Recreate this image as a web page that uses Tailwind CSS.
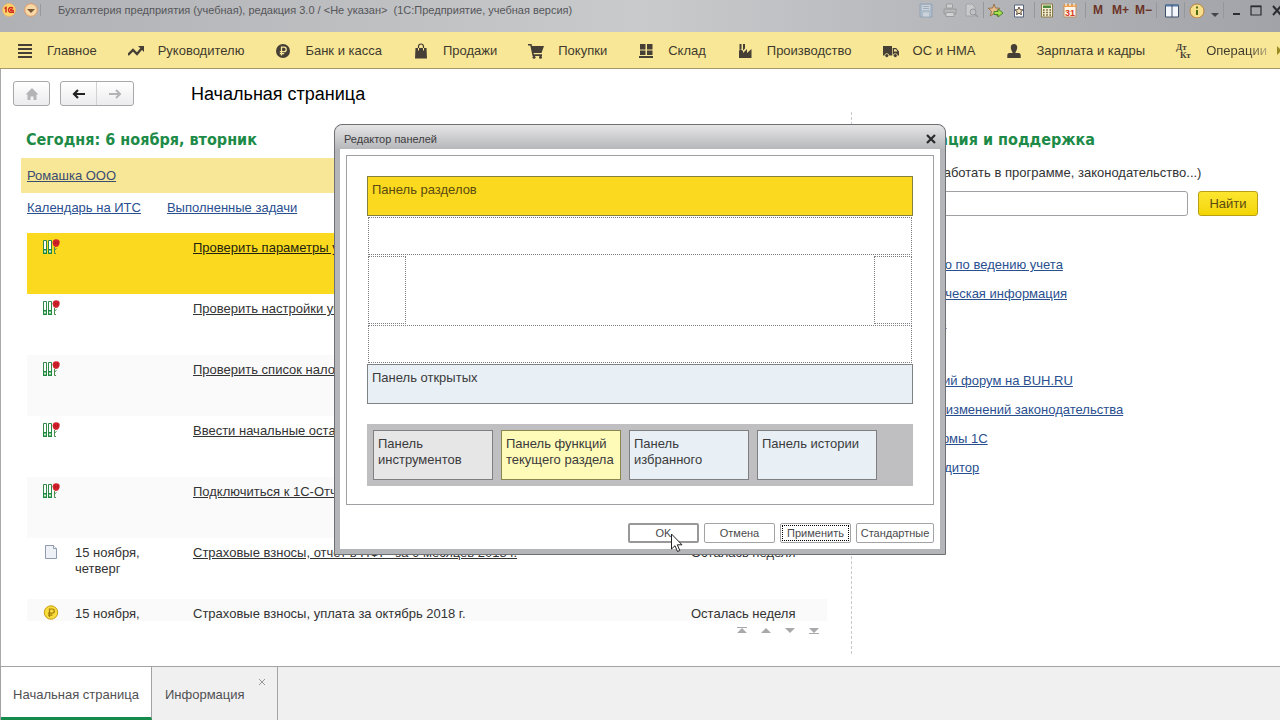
<!DOCTYPE html>
<html lang="ru">
<head>
<meta charset="utf-8">
<meta name="viewport" content="width=device-width, initial-scale=1">
<title>Бухгалтерия предприятия (учебная), редакция 3.0</title>
<script src="https://cdn.jsdelivr.net/npm/@tailwindcss/browser@4"></script>
</head>
<body class="flex h-screen min-h-[720px] flex-col overflow-hidden bg-white font-['Liberation_Sans',Arial,sans-serif] text-[13px] leading-4 text-[#333]">

<svg class="hidden" aria-hidden="true">
  <symbol id="task" viewBox="0 0 17 16">
    <path d="M.5 1.500h3v13h-3zM5.500 1.500h3v13h-3z" fill="#fff" stroke="#2f8a48"/>
    <path d="M0 10h4v5H0zM5 10h4v5H5z" fill="#1f8a3f"/>
    <path d="M1 11.500h2v2H1zM6 11.500h2v2H6z" fill="#d6f0d8"/>
    <path d="M11.500 8v6.500h1.500M11.500 11l2-1.500" fill="none" stroke="#4a8a4a"/>
    <path d="m10.500 1 2-.8 2.500.3 1.700 1.500-.2 3-1.500 2.500-2.700.5-2-1.500-.8-3z" fill="#d3222c"/>
    <path d="m11.500 2.500 1.500 1.200-1.500 1.600M14.800 2.300l-.3 3" fill="none" stroke="#9b141b" stroke-width=".7"/>
  </symbol>
</svg>

<header class="flex h-8 shrink-0 items-start bg-linear-to-r from-[#b0b1b4] via-[#c9cacc] to-[#a2a3a8] text-[12px] text-[#55565a]">
  <div class="flex h-5 grow items-center pl-[2px]">
    <svg class="size-4" viewBox="0 0 16 16"><circle cx="7" cy="8" r="6.500" fill="#fbd76b" stroke="#e8b27a"/><path d="M2.500 6.500 4 5.500v5M11 6.500C9.500 4.500 6.500 5.500 6.500 8s2 2.500 5.500 2.300M10 7.600c-1.500-.6-2 .9-.5 1H12" fill="none" stroke="#d5281e" stroke-width="1.500"/></svg>
    <svg class="ml-1 size-4" viewBox="0 0 16 16"><circle cx="9" cy="8" r="6.300" fill="#f7d9a8" stroke="#e59a63"/><path d="M5 7h8l-4 4z" fill="#7b5534"/></svg>
    <span class="ml-[2px] h-3 w-px bg-[#98999d]"></span>
    <h1 class="ml-[17px] text-[11px] whitespace-nowrap">Бухгалтерия предприятия (учебная), редакция 3.0 / &lt;Не указан&gt;&nbsp; (1С:Предприятие, учебная версия)</h1>
  </div>
  <div class="flex h-5 shrink-0 items-center">
    <button aria-label="Сохранить" class="opacity-60"><svg class="size-4" viewBox="0 0 16 16"><path d="M2 2h12v13H2z" fill="#a9bfd3" stroke="#7c97b3"/><path d="M4 3h8v5H4zM5 10.500h6v4H5z" fill="#d9e4ee"/><path d="M5 4.500h6M5 6.500h6" stroke="#8da5bd"/></svg></button>
    <button aria-label="Печать" class="ml-2 opacity-60"><svg class="size-4" viewBox="0 0 16 16"><path d="M4.500 2h6v4h-6z" fill="#e2e2e2" stroke="#8c8c8c"/><path d="M2 7h12v5H2z" fill="#b9b9b9" stroke="#858585"/><path d="M4 10.500h8v4H4z" fill="#e6e6e6" stroke="#8c8c8c"/></svg></button>
    <button aria-label="Просмотр" class="ml-[5px] opacity-60"><svg class="size-4" viewBox="0 0 16 16"><path d="M3 2h6l3 3v9H3z" fill="#d8d8da" stroke="#97979b"/><circle cx="10" cy="10" r="3" fill="#c4cad0" stroke="#85858b"/><path d="m12 12 3 3" stroke="#85858b" stroke-width="1.500"/></svg></button>
    <span class="ml-1 h-4 w-px bg-[#96979b]"></span>
    <button aria-label="В избранное" class="ml-1"><svg class="size-4" viewBox="0 0 16 16"><path d="m6 2 1.500 4 4.500.3-3.500 2.900L9.700 14 6 11.400 2.300 14l1.200-4.800L.3 6.300 4.600 6z" fill="#e8bd8c" stroke="#8e623b" stroke-width=".8"/><path d="M6 9.500h4V7l5 4-5 4v-2.500H6z" fill="#a8e04f" stroke="#3f7d23" stroke-width=".9"/></svg></button>
    <button aria-label="Избранное" class="ml-[7px]"><svg class="size-4" viewBox="0 0 16 16"><path d="M3.500 3h9v12h-9z" fill="#fff" stroke="#55627a"/><path d="m8 5 1.200 2.700 2.800.2-2.200 1.900.7 2.900L8 11.200l-2.500 1.500.7-2.900L4 7.900l2.800-.2z" fill="#f4e3c1" stroke="#4a3a2c" stroke-width=".9"/></svg></button>
    <span class="ml-[7px] h-4 w-px bg-[#96979b]"></span>
    <button aria-label="Калькулятор" class="ml-1"><svg class="size-4" viewBox="0 0 16 16"><path d="M2.500 2h11v13h-11z" fill="#f6efcf" stroke="#8a7a48"/><path d="M4 3.500h8v2.500H4z" fill="#4d8a3c"/><path d="M4 8h8M4 10.500h8M4 13h8" stroke="#6b5d34" stroke-width="1.500" stroke-dasharray="1.600 1.600"/></svg></button>
    <button aria-label="Календарь" class="ml-[7px]"><svg class="size-4" viewBox="0 0 16 16"><path d="M2 3h12v12H2z" fill="#fff7ec" stroke="#b98f68"/><path d="M1.500 2.500h13V5h-13z" fill="#eaa04e"/><path d="M4 1v3M8 1v3M12 1v3" stroke="#fff"/><text x="8" y="13.800" text-anchor="middle" font-size="9" font-weight="700" fill="#d63a1c">31</text></svg></button>
    <span class="ml-[7px] h-4 w-px bg-[#96979b]"></span>
    <button class="ml-[7px] font-bold text-[#6b3427]">M</button>
    <button class="ml-[9px] font-bold text-[#6b3427]">M+</button>
    <button class="ml-[6px] font-bold text-[#6b3427]">M−</button>
    <span class="ml-1 h-4 w-px bg-[#96979b]"></span>
    <button aria-label="Панели" class="ml-[7px]"><svg class="size-4" viewBox="0 0 16 16"><path d="M1.500 3h13v12h-13z" fill="#f3f6fa" stroke="#3d4f68"/><path d="M1.500 3.500h13" stroke="#5679a6" stroke-width="2"/><path d="M8 3v12" stroke="#3d4f68"/></svg></button>
    <span class="ml-1 h-4 w-px bg-[#96979b]"></span>
    <button aria-label="Справка" class="ml-1"><svg class="size-4" viewBox="0 0 16 16"><circle cx="8" cy="9" r="7" fill="#f8df8b" stroke="#b9803b"/><path d="M8 4.500v2M8 8v5" stroke="#4e6b12" stroke-width="2"/></svg></button>
    <button aria-label="Ещё" class="ml-[6px]"><svg class="h-4 w-2" viewBox="0 0 8 16"><path d="M0 11h8l-4 4z" fill="#44454a"/></svg></button>
    <span class="ml-1 h-4 w-px bg-[#96979b]"></span>
    <button aria-label="Свернуть" class="ml-[6px]"><svg class="size-3" viewBox="0 0 12 12"><path d="M3 10h7" stroke="#2d2e31" stroke-width="2"/></svg></button>
    <button aria-label="Развернуть" class="ml-[6px]"><svg class="size-4" viewBox="0 0 16 16"><path d="M3 4h10v9H3z" fill="none" stroke="#2d2e31" stroke-width="1.200"/><path d="M3 4.500h10" stroke="#2d2e31" stroke-width="1.500"/></svg></button>
    <button aria-label="Закрыть" class="-mr-[6px] ml-[6px]"><svg class="size-4" viewBox="0 0 16 16"><path d="m3 4 8 9M11 4l-8 9" stroke="#2d2e31" stroke-width="2"/></svg></button>
  </div>
</header>

<nav class="relative flex h-[37px] shrink-0 items-center gap-[31px] overflow-hidden border-b border-[#a39a6c] bg-[#f9e798] pt-[2px] pl-[17px] whitespace-nowrap text-[#3f3b2c]">
  <a href="#" class="flex items-center gap-[14px]"><svg class="size-4" viewBox="0 0 16 16"><path d="M1 2h14M1 6h14M1 10h14M1 14h14" stroke="#463f36" stroke-width="2"/></svg>Главное</a>
  <a href="#" class="flex items-center gap-[14px]"><svg class="size-4" viewBox="0 0 16 16"><path d="m0 12 5-5 4 4 5-6" fill="none" stroke="#463f36" stroke-width="2.400"/><path d="M10 3h6v6z" fill="#463f36"/></svg>Руководителю</a>
  <a href="#" class="flex items-center gap-[14px]"><svg class="size-4" viewBox="0 0 16 16"><circle cx="8" cy="8" r="7" fill="#463f36"/><path d="M6.500 12.500V4.200H9a2.200 2.200 0 0 1 0 4.500H4.800M4.800 10.700h4.400" fill="none" stroke="#f9e798" stroke-width="1.300"/></svg>Банк и касса</a>
  <a href="#" class="flex items-center gap-[14px]"><svg class="size-4" viewBox="0 0 16 16"><path d="M2.500 5h11l.5 10.500H2z" fill="#463f36"/><path d="M5.500 5V3.500a2.500 2.500 0 0 1 5 0V5" fill="none" stroke="#463f36" stroke-width="1.200"/><path d="M5.500 5v2.500M10.500 5v2.500" stroke="#f9e798" stroke-width="1"/></svg>Продажи</a>
  <a href="#" class="flex items-center gap-[14px]"><svg class="size-4" viewBox="0 0 16 16"><path d="M0 1h3.500l.6 2H16l-2.500 7H5.600l.3 1.300H14V13H4.500L2.300 2.500H0z" fill="#463f36"/><circle cx="6" cy="14.300" r="1.500" fill="#463f36"/><circle cx="12.500" cy="14.300" r="1.500" fill="#463f36"/></svg>Покупки</a>
  <a href="#" class="flex items-center gap-[14px]"><svg class="size-4" viewBox="0 0 16 16"><path d="M2 1h5.500v5.500H2zM9 1h5.500v5.500H9zM2 7.500h5.500v4.500H2zM9 7.500h5.500v4.500H9zM1 13h14v2H1z" fill="#463f36"/></svg>Склад</a>
  <a href="#" class="flex items-center gap-[14px]"><svg class="size-4" viewBox="0 0 16 16"><path d="M2 15V7.500l2-1 2 1.500V10l4-4v4l4.500-4v9zM2.500 1h2v5l-2 1zM6 1h2v4.500L6 7.500z" fill="#463f36"/></svg>Производство</a>
  <a href="#" class="flex items-center gap-[14px]"><svg class="size-4" viewBox="0 0 16 16"><path d="M0 3h9v9.500H0zM9.700 5h3.500L16 8.500v4H9.700z" fill="#463f36"/><path d="M11 6.300h2l1.500 2.200H11z" fill="#f9e798"/><circle cx="3.800" cy="12.600" r="2" fill="#463f36" stroke="#f9e798" stroke-width=".8"/><circle cx="12.300" cy="12.600" r="2" fill="#463f36" stroke="#f9e798" stroke-width=".8"/></svg>ОС и НМА</a>
  <a href="#" class="flex items-center gap-[14px]"><svg class="size-4" viewBox="0 0 16 16"><path d="M8 1c2.300 0 3.300 1.700 3.200 3.700C11 7 10 8.300 9.500 9v1h3.200c1.300 0 2 1 2 2.500V15H1.300v-2.500c0-1.500.7-2.500 2-2.500h3.200V9C6 8.300 5 7 4.800 4.700 4.700 2.700 5.700 1 8 1" fill="#463f36"/></svg>Зарплата и кадры</a>
  <a href="#" class="flex items-center gap-[14px] bg-linear-to-r from-[#3f3b2c] from-80% to-[#b8ad7e] bg-clip-text text-transparent"><svg class="size-4 overflow-visible" viewBox="0 0 16 16" fill="#463f36" font-family="Liberation Serif" font-weight="700" font-size="9"><text x="0" y="7">Дт</text><text x="4" y="15">Кт</text></svg>Операции</a>
  <svg class="absolute top-3 right-0 h-3 w-[3px]" viewBox="0 0 3 12"><path d="M0 2l3 3v3l-3 3z" fill="#9c8b22"/></svg>
</nav>

<main class="flex grow flex-col border-l border-[#a9a9ab]">
  <div class="flex h-[43px] shrink-0 items-start pt-3 pl-3">
    <button aria-label="Домой" class="flex h-[25px] w-[37px] items-center justify-center rounded-[3px] border border-[#a8a8ab] bg-linear-to-b from-white to-[#ececee]"><svg class="size-4" viewBox="0 0 16 16"><path d="M8 2 14.500 8.500h-2V14h-3v-3.500h-3V14h-3V8.500h-2z" fill="#b4b4b7"/></svg></button>
    <div class="ml-[10px] flex h-[25px] w-[74px] rounded-[3px] border border-[#a8a8ab] bg-linear-to-b from-white to-[#ececee]">
      <button aria-label="Назад" class="flex w-1/2 items-center justify-center border-r border-[#d2d2d5]"><svg class="size-4" viewBox="0 0 16 16"><path d="M7 4 3 8l4 4M3 8h11" fill="none" stroke="#222" stroke-width="2.200"/></svg></button>
      <button aria-label="Вперёд" class="flex w-1/2 items-center justify-center"><svg class="size-4" viewBox="0 0 16 16"><path d="m9 4 4 4-4 4M13 8H2" fill="none" stroke="#b4b4b7" stroke-width="2"/></svg></button>
    </div>
    <h2 class="ml-[57px] text-[18px] leading-[26px] text-black">Начальная страница</h2>
  </div>

  <div class="flex grow">
    <section class="mb-3 min-w-0 grow border-r border-dashed border-[#c9c9cb]">
      <h3 class="pt-4 pl-[25px] font-['DejaVu_Sans_Condensed','Noto_Sans',sans-serif] text-[16px] leading-6 font-bold text-[#1d8b47]">Сегодня: 6 ноября, вторник</h3>
      <div class="mt-[6px] mr-6 ml-5 flex h-[35px] items-center bg-[#f9e798] pl-[6px]"><a href="#" class="text-[#3a4c70] underline">Ромашка ООО</a></div>
      <div class="flex h-10 gap-[26px] pt-[7px] pl-[26px] text-[#2a4f8f]"><a href="#" class="underline">Календарь на ИТС</a><a href="#" class="underline">Выполненные задачи</a></div>
      <div class="mr-6 ml-[26px] h-[388px] overflow-hidden">
        <div class="grid h-[61px] grid-cols-[48px_118px_1fr_136px] bg-[#fad91e] pt-[7px] text-[#231f10]"><svg class="-mt-px ml-4 h-4 w-[17px]"><use href="#task"/></svg><span></span><a href="#" class="underline">Проверить параметры учета</a></div>
        <div class="grid h-[61px] grid-cols-[48px_118px_1fr_136px] pt-[7px]"><svg class="-mt-px ml-4 h-4 w-[17px]"><use href="#task"/></svg><span></span><a href="#" class="underline">Проверить настройки учета</a></div>
        <div class="grid h-[61px] grid-cols-[48px_118px_1fr_136px] bg-[#fafafa] pt-[7px]"><svg class="-mt-px ml-4 h-4 w-[17px]"><use href="#task"/></svg><span></span><a href="#" class="underline">Проверить список налогов</a></div>
        <div class="grid h-[61px] grid-cols-[48px_118px_1fr_136px] pt-[7px]"><svg class="-mt-px ml-4 h-4 w-[17px]"><use href="#task"/></svg><span></span><a href="#" class="underline">Ввести начальные остатки</a></div>
        <div class="grid h-[61px] grid-cols-[48px_118px_1fr_136px] bg-[#fafafa] pt-[7px]"><svg class="-mt-px ml-4 h-4 w-[17px]"><use href="#task"/></svg><span></span><a href="#" class="underline">Подключиться к 1С-Отчетности</a></div>
        <div class="grid h-[61px] grid-cols-[48px_118px_1fr_136px] pt-[7px]"><svg class="-mt-px ml-4 size-4" viewBox="0 0 16 16"><path d="M2.500 1.500h8l3 3v10h-11z" fill="#eef1f6" stroke="#8f9bae"/><path d="M10.500 1.500v3h3" fill="#fff" stroke="#8f9bae"/></svg><span class="w-20">15 ноября, четверг</span><a href="#" class="underline">Страховые взносы, отчет в ПФР&nbsp; за 9 месяцев 2018 г.</a><span>Осталась неделя</span></div>
        <div class="grid h-[22px] grid-cols-[48px_118px_1fr_136px] bg-[#fafafa] pt-[7px] leading-[15px]"><svg class="-mt-px ml-4 size-4" viewBox="0 0 16 16"><circle cx="8" cy="7.500" r="6.700" fill="#f9dd3c" stroke="#c69d12"/><path d="M6.500 12V4h2.700a2 2 0 0 1 0 4.200H5M5 10.200h4.500" fill="none" stroke="#a47f0c" stroke-width="1.200"/></svg><span>15 ноября,</span><a href="#">Страховые взносы, уплата за октябрь 2018 г.</a><span>Осталась неделя</span></div>
      </div>
      <div class="mt-[6px] mr-8 flex justify-end gap-[14px]">
        <button aria-label="В начало"><svg class="h-[7px] w-[10px]" viewBox="0 0 10 7" fill="#a9a9ac"><path d="M0 0h10v1H0zM5 1l5 5H0z"/></svg></button>
        <button aria-label="Вверх"><svg class="h-[7px] w-[10px]" viewBox="0 0 10 7" fill="#a9a9ac"><path d="m5 1 5 5H0z"/></svg></button>
        <button aria-label="Вниз"><svg class="h-[7px] w-[10px]" viewBox="0 0 10 7" fill="#a9a9ac"><path d="M0 1h10L5 6z"/></svg></button>
        <button aria-label="В конец"><svg class="h-[7px] w-[10px]" viewBox="0 0 10 7" fill="#a9a9ac"><path d="M0 1h10L5 6zM0 6h10v1H0z"/></svg></button>
      </div>
    </section>

    <section class="w-[428px] shrink-0 pr-[22px] pl-[18px]">
      <h3 class="pt-4 font-['DejaVu_Sans_Condensed','Noto_Sans',sans-serif] text-[16px] leading-6 font-bold whitespace-nowrap text-[#1d8b47]">Информация и поддержка</h3>
      <label for="search" class="mt-[13px] block whitespace-nowrap">Поиск (как работать в программе, законодательство...)</label>
      <div class="mt-[10px] flex gap-[10px]">
        <input id="search" type="text" class="h-[25px] min-w-0 grow rounded-[3px] border border-[#a0a0a4] bg-white px-2">
        <button class="h-[25px] w-[60px] rounded-[3px] border border-[#b99f14] bg-linear-to-b from-[#fde62e] to-[#f2d500] text-[#5a4a10]">Найти</button>
      </div>
      <ul class="mt-[41px] flex flex-col gap-[13px] pl-[6px] whitespace-nowrap text-[#2a4f8f]">
        <li><a href="#" class="underline">Руководство по ведению учета</a></li>
        <li><a href="#" class="underline">Вся методическая информация</a></li>
        <li><a href="#" class="underline">Новости 1С</a></li>
      </ul>
      <ul class="mt-[42px] flex flex-col gap-[13px] whitespace-nowrap text-[#2a4f8f]">
        <li><a href="#" class="underline">Бухгалтерский форум на BUH.RU</a></li>
        <li><a href="#" class="underline">Мониторинг изменений законодательства</a></li>
        <li><a href="#" class="underline">Новости фирмы 1С</a></li>
        <li><a href="#" class="underline">Интернет-аудитор</a></li>
      </ul>
    </section>
  </div>
</main>

<footer class="flex h-[54px] shrink-0 border-t border-l border-[#a3a3a6] bg-[#f0f0f1] text-[#505053]">
  <button class="flex w-[151px] items-center justify-center border-r border-b-[3px] border-r-[#a3a3a6] border-b-[#168a4a] bg-white pt-[5px]">Начальная страница</button>
  <div class="relative flex w-[126px] items-center border-r border-[#a3a3a6] pl-[13px]">
    <button class="pt-[2px]">Информация</button>
    <button aria-label="Закрыть вкладку" class="absolute top-3 right-3"><svg class="size-[6px]" viewBox="0 0 6 6"><path d="m0 0 6 6M6 0 0 6" stroke="#97979a"/></svg></button>
  </div>
</footer>

<div role="dialog" aria-labelledby="dlg" class="absolute top-[124px] left-1/2 w-[612px] -translate-x-1/2 rounded-t-lg border border-[#6f7073] bg-[#b4b5b8] px-[5px] pb-[5px]">
  <div class="-mx-[5px] flex h-6 items-center justify-between rounded-t-lg bg-linear-to-b from-[#e6e6e7] to-[#b6b7ba] pr-[9px] pl-[9px] pt-1 text-[#3c3c40]">
    <h2 id="dlg" class="text-[11px]">Редактор панелей</h2>
    <button aria-label="Закрыть"><svg class="size-[10px]" viewBox="0 0 10 10"><path d="m1 1 8 8M9 1 1 9" stroke="#2a2a2d" stroke-width="2.200"/></svg></button>
  </div>
  <div class="bg-white p-[6px]">
    <div class="border border-[#9fa0a3] px-5 pt-5 pb-[18px] text-[#3b3b3b]">
      <div class="h-10 border border-[#86803f] bg-[#fad91e] px-1 pt-[5px] text-[#5b4a12]">Панель разделов</div>
      <div class="mx-px mt-px">
        <div class="h-[38px] border border-dotted border-[#808084]"></div>
        <div class="flex h-[70px] justify-between py-px">
          <div class="w-[38px] border border-dotted border-[#808084]"></div>
          <div class="w-[38px] border border-dotted border-[#808084]"></div>
        </div>
        <div class="h-[38px] border border-dotted border-[#808084]"></div>
      </div>
      <div class="mt-px h-10 border border-[#7d8285] bg-[#e8f0f5] px-1 pt-[5px]">Панель открытых</div>
      <div class="mt-5 flex gap-2 bg-[#bfbfc1] p-[6px]">
        <div class="h-[50px] w-[120px] border border-[#7f7f82] bg-[#e6e6e7] px-1 pt-[5px]">Панель инструментов</div>
        <div class="h-[50px] w-[120px] border border-[#8a8650] bg-[#fefab8] pt-[5px] pl-1 whitespace-nowrap">Панель функций<br>текущего раздела</div>
        <div class="h-[50px] w-[120px] border border-[#7f7f82] bg-[#e8f0f6] px-1 pt-[5px]">Панель избранного</div>
        <div class="h-[50px] w-[120px] border border-[#7f7f82] bg-[#e8f0f6] px-1 pt-[5px]">Панель истории</div>
      </div>
    </div>
    <div class="mt-[18px] flex justify-end gap-[5px] text-[11px] text-[#4a4a4d]">
      <button class="h-5 w-[71px] rounded-[2px] border-2 border-[#98989b] bg-white leading-4">OK</button>
      <button class="h-5 w-[71px] rounded-[2px] border border-[#a3a3a6] bg-white">Отмена</button>
      <button class="h-5 w-[71px] rounded-[2px] border border-[#a3a3a6] bg-white outline-1 -outline-offset-3 outline-black outline-dotted">Применить</button>
      <button class="h-5 w-[78px] rounded-[2px] border border-[#a3a3a6] bg-white">Стандартные</button>
    </div>
  </div>
</div>

<svg class="pointer-events-none absolute top-[533px] left-[671px] h-[19px] w-3" viewBox="0 0 12 19"><path d="M.5 1v15l3.500-3.300L6.500 18.500l2.300-1-2.500-5.700H11z" fill="#fff" stroke="#222"/></svg>
</body>
</html>
